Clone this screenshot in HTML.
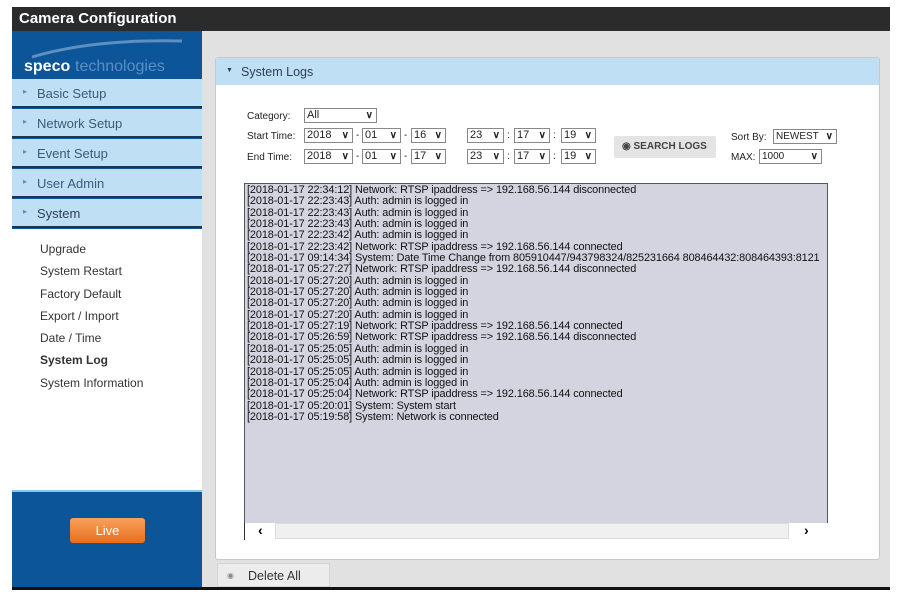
<!DOCTYPE html>
<html><head><style>
*{margin:0;padding:0;box-sizing:border-box}
body{width:902px;height:603px;background:#fff;position:relative;font-family:"Liberation Sans",sans-serif;overflow:hidden}
.abs{position:absolute}
.top{left:12px;top:7px;width:878px;height:24px;background:#2b2b2b;color:#fff;font-weight:bold;font-size:15px;padding:3px 0 0 7px}
.side{left:12px;top:31px;width:190px;height:556px;background:#0b5598}
.logo{left:12px;top:31px;width:190px;height:48px;background:#0b5598;color:#fff}
.mi{position:absolute;left:12px;width:190px;height:29px;background:#bfe0f4;border-bottom:2px solid #1c3550;font-size:13px;color:#3a5a78;padding:7px 0 0 25px}
.mi:before{content:"\25B8";position:absolute;left:11px;top:8px;font-size:8px;color:#6b8aa6}
.sub{left:12px;top:229px;width:190px;height:263px;background:#fff;border-bottom:2px solid #8ac6ea}
.sub div{font-size:12px;color:#333;height:22.3px;padding-left:28px}
.main{left:202px;top:31px;width:688px;height:556px;background:#e1e1e1}
.panel{left:215px;top:57px;width:665px;height:503px;background:#fff;border:1px solid #c8c8c8;border-radius:3px}
.ph{left:216px;top:58px;width:663px;height:27px;background:#bfe0f4;font-size:12.5px;color:#2c3e55;padding:7px 0 0 25px}
.lbl{font-size:10px;color:#222}
.sel{position:absolute;height:15px;border:1px solid #888;background:#fff;font-size:11px;color:#222;padding:0 0 0 2px;line-height:13px}
.sel:after{content:"\2228";position:absolute;right:3px;top:0;font-size:10px;font-weight:bold}
.log{left:244px;top:183px;width:584px;height:340px;background:#d4d4e0;border:1px solid #555;border-bottom:none;font-size:10.9px;line-height:11.35px;color:#111;padding:1px 0 0 2px;white-space:pre;overflow:hidden;letter-spacing:-0.1px}
</style></head><body>
<div class="abs top">Camera Configuration</div>
<div class="abs main"></div>
<div class="abs side"></div>
<div class="abs logo"><svg width="190" height="48"><path d="M20 26 Q80 8 170 10" stroke="#5d8fc0" stroke-width="3" fill="none"/><text x="12" y="40" font-family="Liberation Sans" font-size="16" font-weight="bold" fill="#fff">speco</text><text x="63" y="40" font-family="Liberation Sans" font-size="16" fill="#5b8fc4">technologies</text></svg></div>
<div class="mi" style="top:79px">Basic Setup</div>
<div class="mi" style="top:109px">Network Setup</div>
<div class="mi" style="top:139px">Event Setup</div>
<div class="mi" style="top:169px">User Admin</div>
<div class="mi" style="top:199px;color:#2c3e55">System</div>
<div class="abs sub" style="padding-top:13px">
<div>Upgrade</div><div>System Restart</div><div>Factory Default</div><div>Export / Import</div><div>Date / Time</div><div style="font-weight:bold">System Log</div><div>System Information</div></div>
<div class="abs" style="left:70px;top:518px;width:75px;height:25px;background:linear-gradient(#f7a15a,#e86e1e);border-radius:3px;color:#fff;font-size:13px;text-align:center;line-height:25px">Live</div>
<div class="abs panel"></div>
<div class="abs ph"><span style="position:absolute;left:10px;top:9px;font-size:7px">&#9660;</span>System Logs</div>
<div class="abs lbl" style="left:247px;top:111px">Category:</div>
<div class="sel" style="left:304px;top:108px;width:73px">All</div>
<div class="abs lbl" style="left:247px;top:131px">Start Time:</div>
<div class="abs lbl" style="left:247px;top:152px">End Time:</div>
<div class="sel" style="left:304px;top:128px;width:49px">2018</div><span class="abs lbl" style="left:356px;top:130px">-</span>
<div class="sel" style="left:362px;top:128px;width:39px">01</div><span class="abs lbl" style="left:404px;top:130px">-</span>
<div class="sel" style="left:411px;top:128px;width:35px">16</div>
<div class="sel" style="left:467px;top:128px;width:37px">23</div><span class="abs lbl" style="left:507px;top:130px">:</span>
<div class="sel" style="left:514px;top:128px;width:36px">17</div><span class="abs lbl" style="left:553px;top:130px">:</span>
<div class="sel" style="left:561px;top:128px;width:35px">19</div>
<div class="sel" style="left:304px;top:149px;width:49px">2018</div><span class="abs lbl" style="left:356px;top:151px">-</span>
<div class="sel" style="left:362px;top:149px;width:39px">01</div><span class="abs lbl" style="left:404px;top:151px">-</span>
<div class="sel" style="left:411px;top:149px;width:35px">17</div>
<div class="sel" style="left:467px;top:149px;width:37px">23</div><span class="abs lbl" style="left:507px;top:151px">:</span>
<div class="sel" style="left:514px;top:149px;width:36px">17</div><span class="abs lbl" style="left:553px;top:151px">:</span>
<div class="sel" style="left:561px;top:149px;width:35px">19</div>
<div class="abs" style="left:614px;top:136px;width:102px;height:22px;background:#e4e4e4;border-radius:2px;font-size:10px;font-weight:bold;color:#444;padding:5px 0 0 8px">&#9673; SEARCH LOGS</div>
<div class="abs lbl" style="left:731px;top:132px">Sort By:</div>
<div class="sel" style="left:773px;top:129px;width:64px;font-size:10px">NEWEST</div>
<div class="abs lbl" style="left:731px;top:152px">MAX:</div>
<div class="sel" style="left:759px;top:149px;width:63px;font-size:10px">1000</div>
<div class="abs log">[2018-01-17 22:34:12] Network: RTSP ipaddress =&gt; 192.168.56.144 disconnected
[2018-01-17 22:23:43] Auth: admin is logged in
[2018-01-17 22:23:43] Auth: admin is logged in
[2018-01-17 22:23:43] Auth: admin is logged in
[2018-01-17 22:23:42] Auth: admin is logged in
[2018-01-17 22:23:42] Network: RTSP ipaddress =&gt; 192.168.56.144 connected
[2018-01-17 09:14:34] System: Date Time Change from 805910447/943798324/825231664 808464432:808464393:8121
[2018-01-17 05:27:27] Network: RTSP ipaddress =&gt; 192.168.56.144 disconnected
[2018-01-17 05:27:20] Auth: admin is logged in
[2018-01-17 05:27:20] Auth: admin is logged in
[2018-01-17 05:27:20] Auth: admin is logged in
[2018-01-17 05:27:20] Auth: admin is logged in
[2018-01-17 05:27:19] Network: RTSP ipaddress =&gt; 192.168.56.144 connected
[2018-01-17 05:26:59] Network: RTSP ipaddress =&gt; 192.168.56.144 disconnected
[2018-01-17 05:25:05] Auth: admin is logged in
[2018-01-17 05:25:05] Auth: admin is logged in
[2018-01-17 05:25:05] Auth: admin is logged in
[2018-01-17 05:25:04] Auth: admin is logged in
[2018-01-17 05:25:04] Network: RTSP ipaddress =&gt; 192.168.56.144 connected
[2018-01-17 05:20:01] System: System start
[2018-01-17 05:19:58] System: Network is connected</div>
<div class="abs" style="left:244px;top:523px;width:1px;height:17px;background:#333"></div>
<div class="abs" style="left:275px;top:523px;width:514px;height:16px;background:#f0f0f0;border:1px solid #ddd"></div>
<div class="abs" style="left:258px;top:522px;font-size:14px;font-weight:bold">&#8249;</div>
<div class="abs" style="left:804px;top:522px;font-size:14px;font-weight:bold">&#8250;</div>
<div class="abs" style="left:217px;top:563px;width:113px;height:24px;background:#ececec;border:1px solid #d4d4d4;font-size:12.5px;color:#333;padding:5px 0 0 30px"><span style="position:absolute;left:9px;top:7px;font-size:8px;color:#888">&#9673;</span>Delete All</div>
<div class="abs" style="left:12px;top:587px;width:878px;height:3px;background:#111"></div>
</body></html>
